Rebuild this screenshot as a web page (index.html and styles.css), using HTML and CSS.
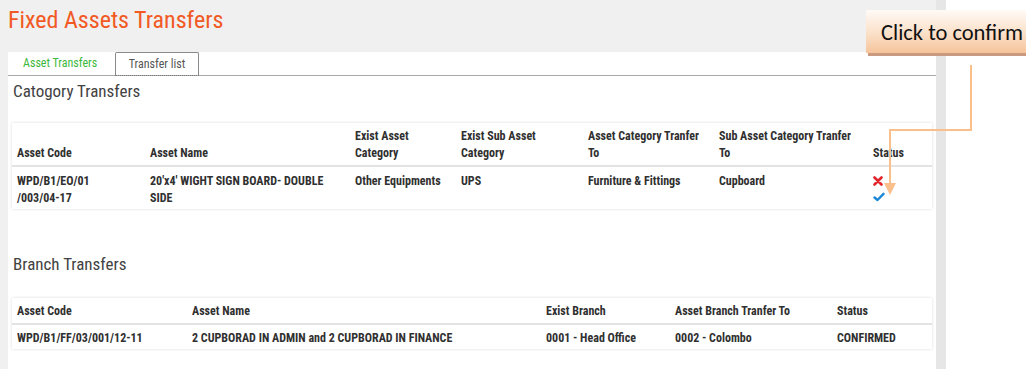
FILE: index.html
```html
<!DOCTYPE html>
<html lang="en">
<head>
    <meta charset="UTF-8">
    <title>Fixed Assets Transfers</title>
    <link rel="stylesheet" href="styles.css">
</head>
<body>
    <div class="page">
        <h1 class="page-title">Fixed Assets Transfers</h1>

        <div class="panel">
            <ul class="tabs">
                <li class="tab tab-link">Asset Transfers</li>
                <li class="tab tab-active">Transfer list</li>
            </ul>

            <section class="section">
                <h2 class="section-title">Catogory Transfers</h2>
                <table class="grid grid-category">
                    <thead>
                        <tr>
                            <th class="c1">Asset Code</th>
                            <th class="c2">Asset Name</th>
                            <th class="c3">Exist Asset<br>Category</th>
                            <th class="c4">Exist Sub Asset<br>Category</th>
                            <th class="c5">Asset Category Tranfer<br>To</th>
                            <th class="c6">Sub Asset Category Tranfer<br>To</th>
                            <th class="c7">Status</th>
                        </tr>
                    </thead>
                    <tbody>
                        <tr>
                            <td>WPD/B1/EO/01<br>/003/04-17</td>
                            <td>20'x4' WIGHT SIGN BOARD- DOUBLE<br>SIDE</td>
                            <td>Other Equipments</td>
                            <td>UPS</td>
                            <td>Furniture &amp; Fittings</td>
                            <td>Cupboard</td>
                            <td class="status-icons">
                                <svg class="icon" width="10" height="10" viewBox="0 0 10 10">
                                    <path d="M1.5 1.5 L8.5 8.5 M8.5 1.5 L1.5 8.5" stroke="#e0262b" stroke-width="2.6" stroke-linecap="round"/>
                                </svg>
                                <svg class="icon" width="12" height="10" viewBox="0 0 12 10">
                                    <path d="M1.5 5.5 L4.5 8 L10.5 1.8" fill="none" stroke="#1e88d8" stroke-width="2.4" stroke-linecap="round" stroke-linejoin="round"/>
                                </svg>
                            </td>
                        </tr>
                    </tbody>
                </table>
            </section>

            <section class="section section-branch">
                <h2 class="section-title">Branch Transfers</h2>
                <table class="grid grid-branch">
                    <thead>
                        <tr>
                            <th class="b1">Asset Code</th>
                            <th class="b2">Asset Name</th>
                            <th class="b3">Exist Branch</th>
                            <th class="b4">Asset Branch Tranfer To</th>
                            <th class="b5">Status</th>
                        </tr>
                    </thead>
                    <tbody>
                        <tr>
                            <td>WPD/B1/FF/03/001/12-11</td>
                            <td>2 CUPBORAD IN ADMIN and 2 CUPBORAD IN FINANCE</td>
                            <td>0001 - Head Office</td>
                            <td>0002 - Colombo</td>
                            <td>CONFIRMED</td>
                        </tr>
                    </tbody>
                </table>
            </section>
        </div>
    </div>

    <!-- annotation laid over the screenshot -->
    <div class="callout">Click to confirm</div>
    <svg class="callout-arrow" width="100" height="140" viewBox="0 0 100 140">
        <path d="M91 0 V65 H10 V118" fill="none" stroke="#fbbf8c" stroke-width="2"/>
        <path d="M4 118 H16 L10 130 Z" fill="#fbbf8c"/>
    </svg>
</body>
</html>
```

FILE: styles.css
```css
:root {
    --title-color: #f15a24;
    --text-color: #3a3a3a;
    --page-bg: #f0f0f0;
    --line: #e3e3e3;
}

body {
    margin: 0;
    background: #fff;
    font-family: Roboto, 'Liberation Sans', sans-serif;
    color: var(--text-color);
    position: relative;
    overflow: hidden;
    height: 369px;
}

.page {
    width: 928px;
    padding-left: 8px;
    background: var(--page-bg);
    border-right: 10px solid #e6e6e6;
    height: 369px;
}

.page-title {
    margin: 0;
    padding: 6px 0 0;
    height: 52px;
    box-sizing: border-box;
    font-size: 24px;
    line-height: 28px;
    font-weight: 400;
    font-stretch: 80%;
    color: var(--title-color);
}

.panel {
    background: #fff;
    height: 317px;
}

.tabs {
    display: flex;
    list-style: none;
    margin: 0;
    padding: 0;
    height: 23px;
    border-bottom: 1px solid #a8a8a8;
    font-size: 12px;
    font-stretch: 85%;
}

.tab {
    line-height: 22px;
    height: 23px;
    box-sizing: border-box;
}

.tab-link {
    color: #3cb83c;
    width: 107px;
    padding-left: 15px;
    box-sizing: border-box;
}

.tab-active {
    color: #555;
    width: 84px;
    text-align: center;
    border: 1px solid #8a8a8a;
    border-bottom: 1px dotted #777;
    border-radius: 2px 2px 0 0;
    height: 24px;
}

.section {
    padding: 0 4px;
}

.section-title {
    margin: 0;
    padding: 5px 0 0 1px;
    height: 47px;
    box-sizing: border-box;
    font-size: 17px;
    font-weight: 400;
    font-stretch: 85%;
    color: #424242;
}

.section-branch .section-title {
    padding-top: 45px;
    height: 89px;
}

.grid {
    width: 920px;
    border-collapse: collapse;
    table-layout: fixed;
    font-size: 12px;
    font-weight: 700;
    font-stretch: 80%;
    line-height: 16.5px;
    color: #303030;
    box-shadow: 0 0 3px rgba(0, 0, 0, 0.14);
}

.grid th,
.grid td {
    text-align: left;
    padding: 5px 5px 4px;
}

.grid th {
    vertical-align: bottom;
    border-bottom: 2px solid var(--line);
}

.grid td {
    vertical-align: top;
    padding-top: 6px;
    padding-bottom: 3px;
}

.grid-branch th {
    padding: 5px 5px 3px;
}

.grid-branch td {
    padding: 5px 5px 3px;
}

.c1 { width: 123px; }
.c2 { width: 195px; }
.c3 { width: 96px; }
.c4 { width: 117px; }
.c5 { width: 121px; }
.c6 { width: 144px; }

.b1 { width: 165px; }
.b2 { width: 344px; }
.b3 { width: 119px; }
.b4 { width: 152px; }

.status-icons .icon {
    display: block;
    margin-top: 3px;
}

.status-icons .icon + .icon {
    margin-top: 6px;
}

.callout {
    position: absolute;
    left: 866px;
    top: 10px;
    width: 170px;
    height: 43px;
    padding: 9px 0 0 15px;
    box-sizing: border-box;
    font-family: Carlito, 'Liberation Sans', sans-serif;
    font-size: 22.5px;
    color: #111;
    background: linear-gradient(#fffaf6, #fbe0c8 55%, #f6c49b);
    box-shadow: 2px 3px 0 #c99a80;
}

.callout-arrow {
    position: absolute;
    left: 880px;
    top: 65px;
}
```
